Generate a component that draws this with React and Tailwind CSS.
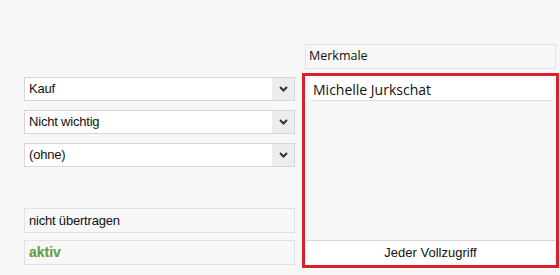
import React from "react";

function Chevron() {
  return (
    <svg width="9" height="6" viewBox="0 0 9 6" className="block">
      <polyline points="1,1 4.5,4.5 8,1" fill="none" stroke="#333" strokeWidth="2" />
    </svg>
  );
}

function Select({ label }) {
  return (
    <div className="flex h-[24px] border border-[#d6d6d6] bg-white">
      <div className="flex flex-1 items-center pl-[4px] text-[13px] tracking-[-0.2px] text-[#111]">{label}</div>
      <div className="flex w-[22px] items-center justify-center bg-[#ececec]">
        <Chevron />
      </div>
    </div>
  );
}

export default function App() {
  return (
    <div
      className="flex h-[275px] w-[560px] bg-[#f7f7f7] pl-[24px]"
      style={{ fontFamily: '"Liberation Sans", Arial, sans-serif' }}
    >
      <div className="flex w-[271px] flex-col pt-[77px]">
        <div className="flex flex-col gap-[9px]">
          <Select label="Kauf" />
          <Select label="Nicht wichtig" />
          <Select label="(ohne)" />
        </div>
        <div className="mt-[41px] flex h-[25px] items-center border border-[#e0e0e0] pl-[4px] text-[13px] tracking-[-0.2px] text-[#111]">
          nicht übertragen
        </div>
        <div className="mt-[7px] flex h-[25px] items-center border border-[#e0e0e0] pl-[4px] text-[14px] font-bold text-[#5c9c3e]">
          aktiv
        </div>
      </div>
      <div className="ml-[7px] flex w-[257px] flex-col pt-[44px]">
        <div
          className="mx-[3px] flex h-[25px] items-center border border-[#e3e3e3] pl-[3px] text-[12.5px] text-[#111]"
          style={{ fontFamily: '"Open Sans", sans-serif' }}
        >
          Merkmale
        </div>
        <div className="mt-[4px] flex h-[195px] flex-col border-[3px] border-[#d7222b] bg-[#f7f7f7]">
          <div className="flex flex-1 flex-col pl-[5px] pr-[3px] pt-[2px]">
            <div
              className="flex h-[23px] items-center border-b border-[#dcdcdc] bg-white pl-[3px] text-[14px] text-[#111]"
              style={{ fontFamily: '"Open Sans", sans-serif' }}
            >
              Michelle Jurkschat
            </div>
          </div>
          <div className="mx-[1px] flex h-[25px] items-center justify-center border-t border-[#d4d4d4] bg-white text-[13px] text-[#111]">
            Jeder Vollzugriff
          </div>
        </div>
      </div>
    </div>
  );
}
